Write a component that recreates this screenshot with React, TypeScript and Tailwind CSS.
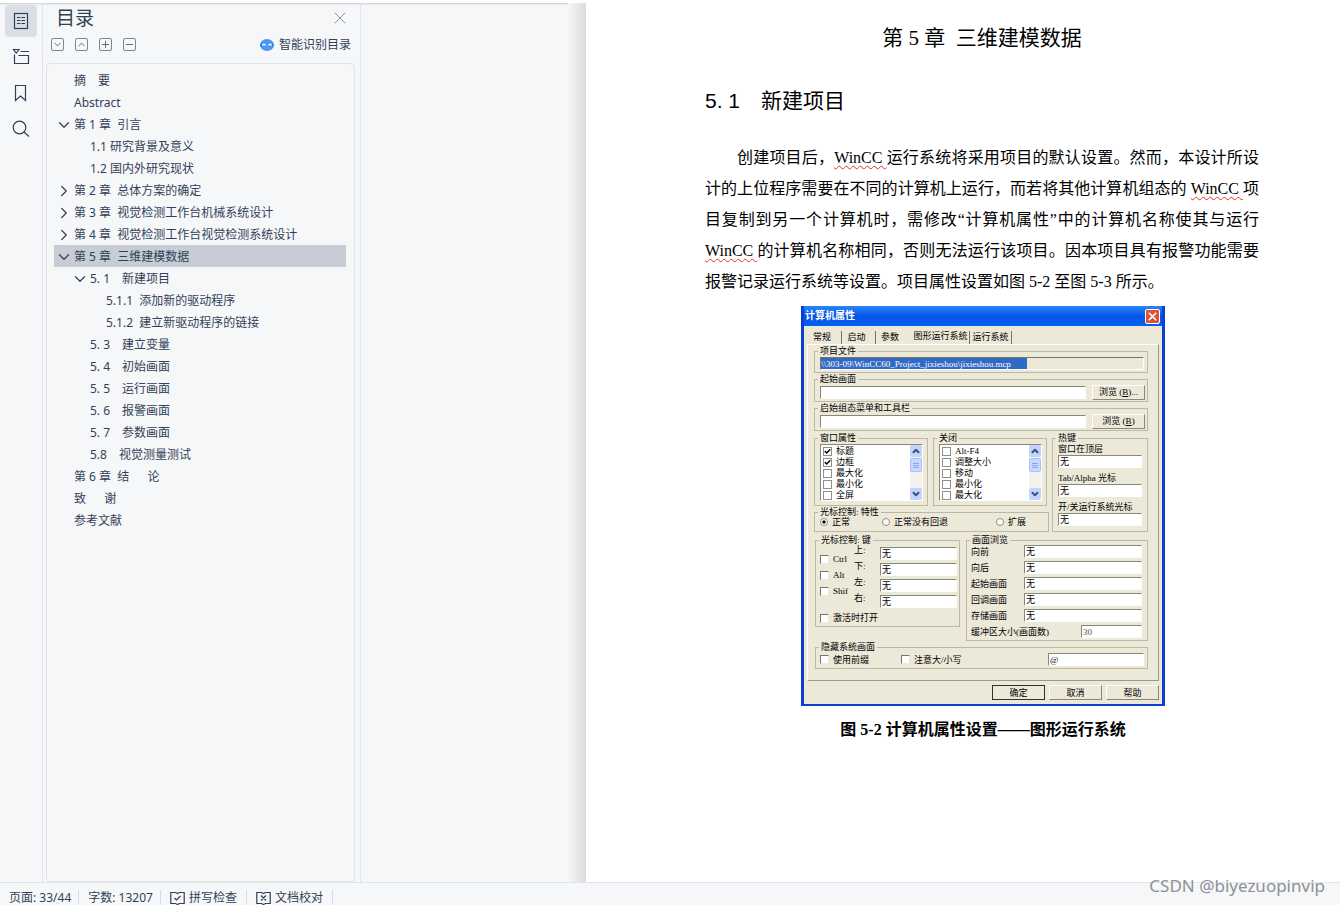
import clsx from "clsx";
import { Check, ChevronDown, ChevronRight, ChevronUp, Minus, Plus, X } from "lucide-react";
import type { ReactNode } from "react";

type OutlineItem = {
  label: string;
  level: 0 | 1 | 2;
  state?: "open" | "closed";
  active?: boolean;
};

const outline: OutlineItem[] = [
  { label: "摘\u3000要", level: 0 },
  { label: "Abstract", level: 0 },
  { label: "第 1 章  引言", level: 0, state: "open" },
  { label: "1.1 研究背景及意义", level: 1 },
  { label: "1.2 国内外研究现状", level: 1 },
  { label: "第 2 章  总体方案的确定", level: 0, state: "closed" },
  { label: "第 3 章  视觉检测工作台机械系统设计", level: 0, state: "closed" },
  { label: "第 4 章  视觉检测工作台视觉检测系统设计", level: 0, state: "closed" },
  { label: "第 5 章  三维建模数据", level: 0, state: "open", active: true },
  { label: "5. 1\u3000新建项目", level: 1, state: "open" },
  { label: "5.1.1  添加新的驱动程序", level: 2 },
  { label: "5.1.2  建立新驱动程序的链接", level: 2 },
  { label: "5. 3\u3000建立变量", level: 1 },
  { label: "5. 4\u3000初始画面", level: 1 },
  { label: "5. 5\u3000运行画面", level: 1 },
  { label: "5. 6\u3000报警画面", level: 1 },
  { label: "5. 7\u3000参数画面", level: 1 },
  { label: "5.8\u3000视觉测量测试", level: 1 },
  { label: "第 6 章  结\u3000  论", level: 0 },
  { label: "致\u3000  谢", level: 0 },
  { label: "参考文献", level: 0 }
];

const outlineTools = [
  { label: "展开", Icon: ChevronDown },
  { label: "收起", Icon: ChevronUp },
  { label: "提升", Icon: Plus },
  { label: "降低", Icon: Minus }
];

const indent = { 0: "pl-1", 1: "pl-5", 2: "pl-9" };

function IconRail() {
  const button = "flex size-8 items-center justify-center rounded-sm";
  const icon = { width: 18, height: 18, fill: "none", stroke: "currentColor", strokeWidth: 1.2 };

  return (
    <nav className="flex w-[43px] shrink-0 flex-col gap-1 border-r border-[#e1e4ea] px-[5px] pt-0.5">
      <button aria-label="目录" className={clsx(button, "bg-[#dadfe6]")}>
        <svg {...icon} viewBox="0 0 18 18">
          <rect x="2.5" y="1.5" width="13" height="15" />
          <path d="M5 5.5h3.5M9.5 5.5H13M5 8.5h3.5M9.5 8.5H13M5 11.5h3.5M9.5 11.5H13" />
        </svg>
      </button>
      <button aria-label="章节" className={button}>
        <svg {...icon} viewBox="0 0 18 18">
          <path d="M1.500 1.500h5.500L4.200 5zM8.500 3.500H17M2.500 6.500v9h14v-8h-10" />
        </svg>
      </button>
      <button aria-label="书签" className={button}>
        <svg {...icon} viewBox="0 0 18 18">
          <path d="M3.500 1.500h10v15l-5-4.500-5 4.500z" />
        </svg>
      </button>
      <button aria-label="查找" className={button}>
        <svg {...icon} viewBox="0 0 18 18">
          <circle cx="7.500" cy="7.500" r="6.300" />
          <path d="m12 12 5 4.500" />
        </svg>
      </button>
    </nav>
  );
}

function OutlinePanel() {
  return (
    <aside className="flex w-[318px] shrink-0 flex-col border-r border-[#e1e4ea]">
      <div className="flex h-[30px] items-center justify-between pr-2.5 pl-[13px]">
        <h2 className="text-[19px]">目录</h2>
        <button aria-label="关闭">
          <X className="size-5 text-[#8b93a3]" strokeWidth={1.2} />
        </button>
      </div>
      <div className="flex h-[22px] items-center justify-between pr-[9px] pl-2">
        <div className="flex gap-[11px]">
          {outlineTools.map(({ label, Icon }) => (
            <button
              key={label}
              aria-label={label}
              className="flex size-[13px] items-center justify-center rounded-[2px] border border-[#80858f] text-[#5a606c]"
            >
              <Icon className="size-[11px] shrink-0" strokeWidth={2} />
            </button>
          ))}
        </div>
        <button className="flex items-center gap-[5px] pt-0.5 text-xs">
          <svg viewBox="0 0 14 12" className="h-3 w-3.5">
            <ellipse cx="7" cy="6" rx="7" ry="6" fill="#4a96f5" />
            <path d="M0 5.500 2 4.500v3L0 7zM14 5.500l-2-1v3l2-.5z" fill="#2f7fe8" />
            <path d="M2.500 6.500q1.500-2.500 3 0M8.500 6.500q1.500-2.500 3 0" stroke="#fff" strokeWidth="1.300" fill="none" />
          </svg>
          智能识别目录
        </button>
      </div>
      <ul className="mt-2 mr-[5px] ml-[3px] flex-1 rounded-sm border border-[#e1e4ea] pt-[5px] pr-2 pl-[7px] text-xs">
        {outline.map((item) => (
          <li
            key={item.label}
            className={clsx("flex h-[22px] items-center", indent[item.level], item.active && "bg-[#c6cdd5]")}
          >
            <span className="flex w-4 shrink-0 pt-0.5">
              {item.state && (
                <button aria-label={item.state === "open" ? "收起" : "展开"} className="-mx-[3px]">
                  {item.state === "open" ? (
                    <ChevronDown className="size-[18px]" strokeWidth={1.6} />
                  ) : (
                    <ChevronRight className="size-[18px]" strokeWidth={1.6} />
                  )}
                </button>
              )}
            </span>
            <a href="#chapter" className="pt-0.5 whitespace-pre">
              {item.label}
            </a>
          </li>
        ))}
      </ul>
    </aside>
  );
}

const sunken =
  "h-[13px] min-w-0 border border-t-[#8a8778] border-l-[#8a8778] border-r-white border-b-white bg-white px-px";

function Group({ title, className, children }: { title: string; className?: string; children: ReactNode }) {
  return (
    <fieldset className={clsx("min-w-0 border border-[#bbb8a6]", className)}>
      <legend className="ml-[3px] px-0.5 leading-[10px] whitespace-pre">{title}</legend>
      {children}
    </fieldset>
  );
}

function PushButton({ children, primary }: { children: ReactNode; primary?: boolean }) {
  return (
    <button
      className={clsx(
        "h-[15px] w-[53px] shrink-0 border bg-[#ece9d8] leading-[12px]",
        primary
          ? "border-[#33322c]"
          : "border-t-white border-r-[#8a8778] border-b-[#8a8778] border-l-white"
      )}
    >
      {children}
    </button>
  );
}

function Tick({ label, checked, flat }: { label: string; checked?: boolean; flat?: boolean }) {
  return (
    <label className="flex items-center gap-1 whitespace-nowrap">
      <span className="relative flex">
        <input
          type="checkbox"
          defaultChecked={checked}
          className={clsx(
            "size-[9px] appearance-none border bg-white",
            flat ? "border-[#8f8f8f]" : "border-t-[#77756a] border-r-[#ece9d8] border-b-[#ece9d8] border-l-[#77756a]"
          )}
        />
        {checked && <Check className="pointer-events-none absolute inset-px size-[7px] text-black" strokeWidth={5} />}
      </span>
      {label}
    </label>
  );
}

function Radio({ label, checked }: { label: string; checked?: boolean }) {
  return (
    <label className="flex items-center gap-1">
      <input
        type="radio"
        name="cursor"
        defaultChecked={checked}
        className="size-2 appearance-none rounded-full border border-[#8f8d80] bg-white checked:bg-[radial-gradient(black_30%,white_45%)]"
      />
      {label}
    </label>
  );
}

function TickList({ items }: { items: { label: string; checked?: boolean }[] }) {
  return (
    <div className="mt-px mr-1 mb-1 ml-[5px] flex h-[57px] justify-between overflow-hidden border border-t-[#8a8778] border-r-white border-b-white border-l-[#8a8778] bg-white">
      <div className="pt-px pl-0.5 leading-[11px]">
        {items.map((item) => (
          <Tick key={item.label} flat {...item} />
        ))}
      </div>
      <div className="flex w-3 flex-col bg-[#f3f2ec]">
        <button aria-label="向上" className="flex h-3 items-center justify-center rounded-[2px] bg-[#c3d3fb] text-[#3d5586]">
          <ChevronUp className="size-2.5 shrink-0" strokeWidth={5} />
        </button>
        <div className="mt-px flex h-3.5 flex-col items-center justify-center gap-px rounded-[2px] border border-[#a9bff5] bg-[#c9d8fc]">
          <span className="h-px w-1.5 bg-[#8ba5e6]" />
          <span className="h-px w-1.5 bg-[#8ba5e6]" />
          <span className="h-px w-1.5 bg-[#8ba5e6]" />
        </div>
        <button
          aria-label="向下"
          className="mt-auto flex h-3 items-center justify-center rounded-[2px] bg-[#c3d3fb] text-[#3d5586]"
        >
          <ChevronDown className="size-2.5 shrink-0" strokeWidth={5} />
        </button>
      </div>
    </div>
  );
}

const tabs = [
  { label: "常规", className: "w-[35px] border-r pr-1" },
  { label: "启动", className: "w-[34px] border-r pr-1" },
  { label: "参数", className: "w-8 pr-1" },
  { label: "图形运行系统", className: "w-[62px] border-r pb-0.5 pl-1" },
  { label: "运行系统", className: "w-[42px] border-r" }
];

const windowTicks = [
  { label: "标题", checked: true },
  { label: "边框", checked: true },
  { label: "最大化" },
  { label: "最小化" },
  { label: "全屏" }
];

const closeTicks = [
  { label: "Alt-F4" },
  { label: "调整大小" },
  { label: "移动" },
  { label: "最小化" },
  { label: "最大化" }
];

const hotkeys = ["窗口在顶层", "Tab/Alpha 光标", "开/关运行系统光标"];
const directions = ["上", "下", "左", "右"];
const browse = ["向前", "向后", "起始画面", "回调画面", "存储画面"];

function PropertiesDialog() {
  return (
    <section
      aria-label="计算机属性"
      className="w-[364px] border-x-[3px] border-b-2 border-[#0a3fd0] bg-[#ece9d8] font-['Liberation_Serif','Noto_Sans_CJK_SC',serif] text-[9px] leading-[10px] text-black"
    >
      <header className="flex h-5 items-center justify-between bg-linear-to-b from-[#2b86fb] via-[#0355e6] to-[#0560f4] pr-0.5 pl-px">
        <h3 className="text-[10px] font-bold text-white">计算机属性</h3>
        <button
          aria-label="关闭"
          className="flex size-[15px] items-center justify-center rounded-[2px] border border-white bg-[#dd5236] text-white"
        >
          <X className="size-[13px] shrink-0" strokeWidth={3} />
        </button>
      </header>
      <div className="px-[3px] pb-1">
        <div className="flex h-[18px] items-end">
          {tabs.map((tab) => (
            <button
              key={tab.label}
              className={clsx("h-[13px] border-[#77756a] leading-[11px] whitespace-nowrap", tab.className)}
            >
              {tab.label}
            </button>
          ))}
        </div>
        <div className="flex flex-col gap-px border border-t-white border-r-[#9c998a] border-b-[#9c998a] border-l-white pt-px pr-[10px] pb-[11px] pl-1.5">
          <Group title="项目文件">
            <div className="mt-px mr-[3px] mb-0.5 ml-[5px] flex h-[13px] border border-t-[#77756a] border-r-white border-b-white border-l-[#77756a]">
              <input
                aria-label="项目文件"
                readOnly
                value="\\303-09\WinCC60_Project_jixieshou\jixieshou.mcp"
                className="w-[206px] bg-[#316ac5] text-white"
              />
            </div>
          </Group>
          <Group title="起始画面">
            <div className="mb-px flex h-4 items-center justify-between pr-0.5 pl-[5px]">
              <input aria-label="起始画面" className={clsx(sunken, "w-[266px]")} />
              <PushButton>
                浏览 (<u>B</u>)...
              </PushButton>
            </div>
          </Group>
          <Group title="启始组态菜单和工具栏">
            <div className="mb-px flex h-4 items-center justify-between pr-0.5 pl-[5px]">
              <input aria-label="启始组态菜单和工具栏" className={clsx(sunken, "w-[266px]")} />
              <PushButton>
                浏览 (<u>B</u>)
              </PushButton>
            </div>
          </Group>

          <div className="mt-px flex justify-between">
            <div className="flex w-[235px] flex-col gap-px">
              <div className="flex gap-[5px]">
                <Group title="窗口属性" className="w-[114px]">
                  <TickList items={windowTicks} />
                </Group>
                <Group title="关闭" className="w-[114px]">
                  <TickList items={closeTicks} />
                </Group>
              </div>
              <Group title="光标控制: 特性">
                <div className="mb-1 flex h-[10px] items-center pl-[5px]">
                  <Radio label="正常" checked />
                  <div className="w-8" />
                  <Radio label="正常没有回退" />
                  <div className="w-12" />
                  <Radio label="扩展" />
                </div>
              </Group>
            </div>
            <Group title="热键" className="w-24">
              <div className="flex flex-col gap-[5px] pt-px pr-[5px] pb-[5px] pl-[5px]">
                {hotkeys.map((label) => (
                  <label key={label} className="flex flex-col gap-px whitespace-nowrap">
                    {label}
                    <input defaultValue="无" className={sunken} />
                  </label>
                ))}
              </div>
            </Group>
          </div>

          <div className="mt-0.5 ml-px flex items-start justify-between">
            <Group title="光标控制: 键" className="w-[145px]">
              <div className="flex justify-between pr-0.5 pl-1">
                <div className="flex w-8 flex-col gap-1.5 pt-[9px]">
                  <Tick label="Ctrl" />
                  <Tick label="Alt" />
                  <Tick label="Shif" />
                </div>
                <div className="flex w-6 flex-col gap-1.5">
                  {directions.map((direction) => (
                    <label key={direction} htmlFor={direction}>
                      {direction}:
                    </label>
                  ))}
                </div>
                <div className="flex w-[77px] flex-col gap-[3px] pt-0.5">
                  {directions.map((direction) => (
                    <input key={direction} id={direction} defaultValue="无" className={sunken} />
                  ))}
                </div>
              </div>
              <div className="pt-[5px] pb-[3px] pl-1">
                <Tick label="激活时打开" />
              </div>
            </Group>
            <Group title="画面浏览" className="w-[182px]">
              <div className="flex flex-col gap-[3px] pr-[5px] pb-0.5 pl-1">
                {browse.map((label) => (
                  <label key={label} className="flex items-center justify-between">
                    {label}
                    <input defaultValue="无" className={clsx(sunken, "w-[118px]")} />
                  </label>
                ))}
                <label className="flex items-center justify-between whitespace-nowrap">
                  缓冲区大小(画面数)
                  <input defaultValue="30" className={clsx(sunken, "w-[61px] text-[#555]")} />
                </label>
              </div>
            </Group>
          </div>

          <div className="ml-px">
            <Group title="隐藏系统画面">
              <div className="mt-px mb-0.5 flex h-[13px] items-center pr-[3px] pl-1">
                <Tick label="使用前缀" />
                <div className="w-8" />
                <Tick label="注意大/小写" />
                <input aria-label="前缀" defaultValue="@" className={clsx(sunken, "ml-auto w-24")} />
              </div>
            </Group>
          </div>
        </div>
        <div className="flex justify-end gap-1 pt-1">
          <PushButton primary>确定</PushButton>
          <PushButton>取消</PushButton>
          <PushButton>帮助</PushButton>
        </div>
      </div>
    </section>
  );
}

function Misspelt({ children }: { children: ReactNode }) {
  return (
    <span className="underline decoration-[#e03030] decoration-wavy decoration-1 underline-offset-2">{children}</span>
  );
}

function DocumentPage() {
  const line = "block whitespace-pre [text-align-last:justify]";

  return (
    <article
      id="chapter"
      className="flex flex-1 flex-col items-center bg-white pt-[19px] pr-[81px] pl-[119px] font-['Liberation_Serif','Noto_Sans_CJK_SC',serif] text-black"
    >
      <h1 className="text-[21px] leading-8 whitespace-pre">第 5 章  三维建模数据</h1>
      <h2 className="mt-[31px] self-start font-['Liberation_Sans','Noto_Sans_CJK_SC',sans-serif] text-[21px] leading-8 whitespace-pre">
        5. 1{"\u3000"}新建项目
      </h2>
      <p className="mt-[25px] self-stretch text-base leading-[31px]">
        <span className={clsx(line, "pl-8")}>
          创建项目后，<Misspelt>WinCC </Misspelt>运行系统将采用项目的默认设置。然而，本设计所设
        </span>
        <span className={line}>
          计的上位程序需要在不同的计算机上运行，而若将其他计算机组态的 <Misspelt>WinCC </Misspelt>项
        </span>
        <span className={line}>目复制到另一个计算机时，需修改“计算机属性”中的计算机名称使其与运行</span>
        <span className={line}>
          <Misspelt>WinCC </Misspelt>的计算机名称相同，否则无法运行该项目。因本项目具有报警功能需要
        </span>
        <span className="block">报警记录运行系统等设置。项目属性设置如图 5-2 至图 5-3 所示。</span>
      </p>
      <figure className="mt-[9px] flex flex-col items-center gap-2 pl-0.5">
        <PropertiesDialog />
        <figcaption className="text-base leading-[31px] font-bold">图 5-2 计算机属性设置——图形运行系统</figcaption>
      </figure>
    </article>
  );
}

function StatusBar() {
  const cell = "flex items-center gap-1 border-r border-[#d9dde3]";
  const icon = { width: 15, height: 14, fill: "none", stroke: "currentColor", strokeWidth: 1.2 };

  return (
    <footer className="flex h-[23px] items-end border-t border-[#e1e4ea] pl-[9px] text-xs leading-4">
      <div className="flex h-[15px] items-center">
        <span className={clsx(cell, "pr-[7px]")}>页面: 33/44</span>
        <span className={clsx(cell, "pr-[7px] pl-[9px]")}>字数: 13207</span>
        <button className={clsx(cell, "pr-[9px] pl-[9px]")}>
          <svg {...icon} viewBox="0 0 15 14">
            <path d="M5.500 1.500H.8v11h4.700L7.500 13.500l2-1h4.700v-11H9.500l-2 1zM4.500 7l2 2 4-4" />
          </svg>
          拼写检查
        </button>
        <button className={clsx(cell, "pr-[9px] pl-[9px]")}>
          <svg {...icon} viewBox="0 0 15 14">
            <path d="M5.500 1.500H.8v11h4.700L7.500 13.500l2-1h4.700v-11H9.500l-2 1zM5 4.500l5 5M10 4.500l-5 5" />
          </svg>
          文档校对
        </button>
      </div>
    </footer>
  );
}

export default function App() {
  return (
    <div className="relative flex min-h-screen flex-col bg-[#f5f7f9] font-['Noto_Sans','Noto_Sans_CJK_SC',sans-serif] text-[#333f57]">
      <div className="h-[3px] bg-white" />
      <main className="flex flex-1 shadow-[inset_0_3px_2px_-2px_#c9ccd0]">
        <IconRail />
        <OutlinePanel />
        <div className="flex w-[225px] shrink-0 justify-end">
          <div className="w-[18px] bg-linear-to-r from-[#f5f7f9] to-[#dadcde]" />
        </div>
        <DocumentPage />
      </main>
      <StatusBar />
      <div className="absolute right-[15px] bottom-[7px] text-[17px] leading-6 text-[#8d9096]">CSDN @biyezuopinvip</div>
    </div>
  );
}
